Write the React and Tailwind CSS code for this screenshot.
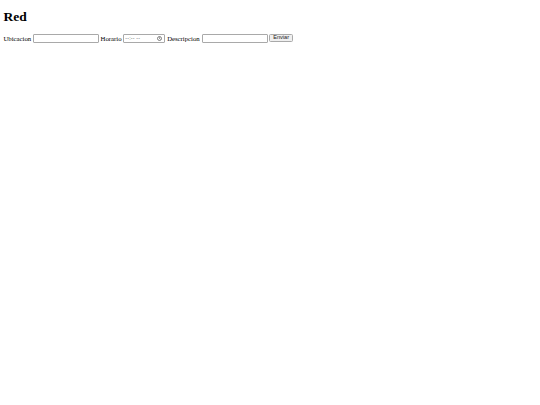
import React from 'react';

const Clock = () => (
  <svg width="5" height="5" viewBox="0 0 10 10" className="ml-auto">
    <circle cx="5" cy="5" r="4" fill="none" stroke="#333" strokeWidth="1.2" />
    <path d="M5 2.6 V5 L6.6 6" fill="none" stroke="#333" strokeWidth="1.2" />
  </svg>
);

export default function App() {
  return (
    <div className="bg-white min-h-[405px] px-[3.4px] pt-[9px] font-['Liberation_Serif',serif] text-black">
      <h1 className="text-[13.5px] font-bold leading-[15.5px] mb-[9px]">Red</h1>
      <form className="flex items-center text-[6.75px] leading-[9px]" onSubmit={(e) => e.preventDefault()}>
        <label>Ubicacion</label>
        <input
          type="text"
          className="ml-[1.6px] mr-[1.8px] w-[66px] h-[9px] border border-[#a9a9a9] rounded-[1px] bg-white text-[5.6px] px-[1px]"
        />
        <label>Horario</label>
        <div className="ml-[1.8px] mr-[1.8px] w-[42px] h-[9px] border border-[#a9a9a9] rounded-[1px] bg-white flex items-center px-[1px] pr-[2px] font-['Liberation_Sans',sans-serif] text-[5.2px] text-[#555]">
          <span className="tracking-[0.2px]">--:-- --</span>
          <Clock />
        </div>
        <label>Descripcion</label>
        <input
          type="text"
          className="ml-[1.8px] mr-[1.8px] w-[66px] h-[9px] border border-[#a9a9a9] rounded-[1px] bg-white text-[5.6px] px-[1px]"
        />
        <button
          type="submit"
          className="w-[23.5px] h-[8.5px] border border-[#a9a9a9] rounded-[1.5px] bg-[#efefef] font-['Liberation_Sans',sans-serif] text-[5.6px] leading-none text-[#222] flex items-center justify-center"
        >
          Enviar
        </button>
      </form>
    </div>
  );
}
